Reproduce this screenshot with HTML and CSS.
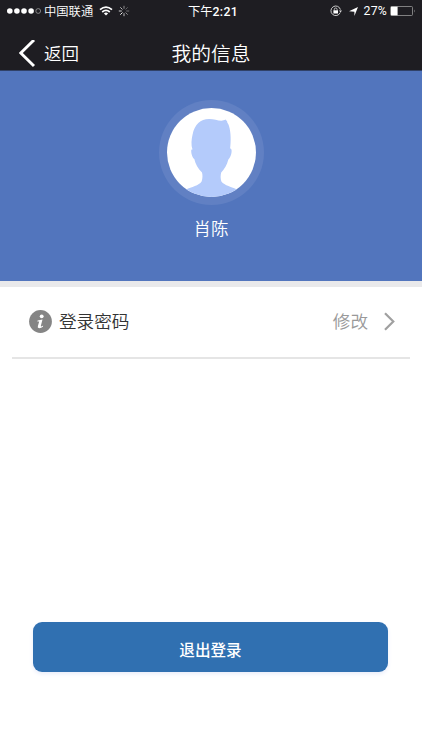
FILE: index.html
```html
<!DOCTYPE html>
<html lang="zh-CN">
<head>
<meta charset="utf-8">
<meta name="viewport" content="width=device-width, initial-scale=1">
<title>我的信息</title>
<link rel="stylesheet" href="styles.css">
</head>
<body>
<header class="top">
  <div class="status">
    <div class="status-left">
      <svg class="signal" width="34" height="8" viewBox="0 0 34 8" fill="#fff"><circle cx="2.8" cy="4" r="2.8"/><circle cx="9.9" cy="4" r="2.8"/><circle cx="17" cy="4" r="2.8"/><circle cx="24.1" cy="4" r="2.8"/><circle cx="31.2" cy="4" r="2.4" fill="none" stroke="#aaa" stroke-width=".7"/></svg>
      <span class="carrier">中国联通</span>
      <svg class="wifi" width="14" height="10" viewBox="0 0 14 10" fill="none" stroke="#fff" stroke-width="1.7"><path d="M1 3.7Q7-1.5 13 3.7M3.2 6Q7 2.7 10.8 6"/><path d="M4.9 7.4Q7 5.7 9.1 7.4L7 9.6z" fill="#fff" stroke="none"/></svg>
      <svg class="spinner" width="12" height="12" viewBox="-6 -6 12 12" stroke="#fff" stroke-width="1" stroke-linecap="round"><path d="M0-2.6V-4.8" opacity=".5"/><path d="M1.8-1.8L3.4-3.4" opacity=".3"/><path d="M2.6 0H4.8" opacity=".35"/><path d="M1.8 1.8L3.4 3.4" opacity=".5"/><path d="M0 2.6V4.8" opacity=".7"/><path d="M-1.8 1.8L-3.4 3.4" opacity=".95"/><path d="M-2.6 0H-4.8" opacity=".8"/><path d="M-1.8-1.8L-3.4-3.4" opacity=".7"/></svg>
    </div>
    <span class="time">下午<b>2:21</b></span>
    <div class="status-right">
      <svg class="lock" width="12" height="12" viewBox="0 0 12 12" fill="none" stroke="#ddd"><path d="M10.2 7.6A4.8 4.8 0 1 1 10.4 4.6" stroke-width=".9"/><path d="M9 5.5h3l-1.5 2z" fill="#ddd" stroke="none"/><path d="M4.3 5.5V4.4a1.4 1.4 0 0 1 2.8 0v1.1" stroke-width=".8"/><path d="M3.4 5.3h4.6v3.2H3.4z" fill="#fff" stroke="none"/></svg>
      <svg class="arrow" width="9" height="9" viewBox="0 0 9 9" fill="#fff"><path d="M9 0L5.4 9V4.8L0 4.3z"/></svg>
      <span class="percent">27%</span>
      <svg class="battery" width="26" height="10" viewBox="0 0 26 10"><rect x=".5" y=".5" width="22" height="9" rx="1" fill="none" stroke="#999" stroke-width=".8"/><path d="M1 .7h6.6v8.6H1z" fill="#fff"/><path d="M24 3.4q1.4 1.6 0 3.2z" fill="#999"/></svg>
    </div>
  </div>
  <nav class="nav">
    <a class="back"><svg width="17" height="28" viewBox="0 0 17 28" fill="none" stroke="#fff" stroke-width="2.9"><path d="M15 0L1.8 13 15 26"/></svg><span>返回</span></a>
    <h1>我的信息</h1>
  </nav>
</header>
<section class="profile">
  <div class="avatar">
    <svg width="89" height="89" viewBox="0 0 89 89"><defs><clipPath id="disc"><circle cx="44.5" cy="44.5" r="44.5"/></clipPath></defs><g clip-path="url(#disc)"><path fill="#fff" d="M0 0h89v89H0z"/><path fill="#b4cbfb" d="M25.5 41.5C23.8 37 24.5 31 25.6 26.5C27.5 16.5 33.5 11.2 42 11C48 10.8 54 14.5 58.6 11.6L60.2 13.5C60 15 61.3 15 62 18C64 24 64 34 63.1 40.5C65.4 40 65 46 62.8 49.5C62.3 51 61.6 50.5 61.2 52C60 57 57.5 61 54.2 64.5C53.4 67.5 53.4 70.5 54.4 73.5C57.5 77.5 65 79 70 81.5L77 89H12L19 81.5C24.5 79 32 77.5 34.6 73.5C35.7 70.5 35.7 67 35 64.5C31 61 28.5 56 27.3 51C25.5 50 24.3 46 24.2 43C24.2 41.5 24.8 41.2 25.5 41.5Z"/></g></svg>
  </div>
  <div class="name">肖陈</div>
</section>
<main>
  <div class="row">
    <svg class="info" width="23" height="23" viewBox="0 0 23 23"><circle cx="11.5" cy="11.5" r="11.4" fill="#858585"/><circle cx="12.7" cy="6.3" r="1.9" fill="#fff"/><path d="M8.6 10.4L13.5 9.4 11.8 16.1Q11.7 17 14.1 15.5L13.9 16.7Q11.8 18.5 9.7 18.1Q8.3 17.7 8.9 15.9L10.2 11.6 8.3 11.6z" fill="#fff"/></svg>
    <span class="label">登录密码</span>
    <span class="action">修改</span>
    <svg class="chevron" width="11" height="19" viewBox="0 0 11 19" fill="none" stroke="#a0a0a0" stroke-width="2.2"><path d="M1 1.2L9.3 9.5 1 17.8"/></svg>
  </div>
</main>
<footer><button class="logout">退出登录</button></footer>
</body>
</html>
```
FILE: styles.css
```css
* { box-sizing: border-box; }
body {
  margin: 0;
  height: 750px;
  display: flex;
  flex-direction: column;
  background: #fff;
  font-family: Roboto, "Noto Sans CJK SC", sans-serif;
  font-weight: 350;
  overflow: hidden;
}
svg { display: block; flex: none; }
.top { height: 71px; background: #1e1d22; color: #fff; border-bottom: 1px solid #304168; }
.status {
  height: 22px;
  display: grid;
  grid-template-columns: 1fr auto 1fr;
  align-items: center;
  padding: 0 6px 0 7px;
  font-size: 12.3px;
  line-height: 22px;
}
.status-left, .status-right { display: flex; align-items: center; }
.status-right { justify-content: flex-end; }
.carrier { margin-left: 3px; padding-top: 2px; line-height: 20px; }
.wifi { margin-left: 6px; }
.spinner { margin-left: 5px; }
.time { padding: 2px 0 0 3px; line-height: 20px; font-weight: 400; }
.time b { font-weight: 500; letter-spacing: .35px; }
.arrow { margin-left: 7px; }
.percent { margin: 0 3px 0 6px; font-weight: 400; letter-spacing: .2px; }
.nav {
  height: 48px;
  display: grid;
  grid-template-columns: 1fr auto 1fr;
  align-items: center;
  padding: 15px 19px 0;
}
.back { display: flex; align-items: center; gap: 8px; font-size: 17.5px; line-height: 28px; }
h1 { margin: 0; padding-top: 2px; font-size: 19.8px; line-height: 28px; font-weight: 350; }
.profile {
  height: 210px;
  background: #5275bd;
  display: flex;
  flex-direction: column;
  align-items: center;
  padding-top: 29px;
}
.avatar { padding: 8px; border-radius: 50%; background: #6180c3; }
.name { margin-top: 11px; color: #fff; font-size: 17.5px; line-height: 26px; }
main { flex: 1; border-top: 6px solid #e9e9eb; padding: 0 12px; }
.row {
  height: 72px;
  display: flex;
  align-items: center;
  padding: 0 15px 1px 17px;
  border-bottom: 2px solid #e5e5e5;
  font-size: 17.6px;
  line-height: 26px;
}
.label { color: #333; margin-left: 7px; }
.action { margin-left: auto; color: #999; }
.chevron { margin-left: 16px; }
footer { padding: 0 34px 78px 33px; }
.logout {
  display: block;
  width: 100%;
  height: 50px;
  border: 0;
  border-radius: 9px;
  background: #3070b1;
  color: #fff;
  font: 500 15.6px/50px "Noto Sans CJK SC", sans-serif;
  padding: 2px 0 0;
  box-shadow: 0 2px 4px #e9edfa;
}
```
